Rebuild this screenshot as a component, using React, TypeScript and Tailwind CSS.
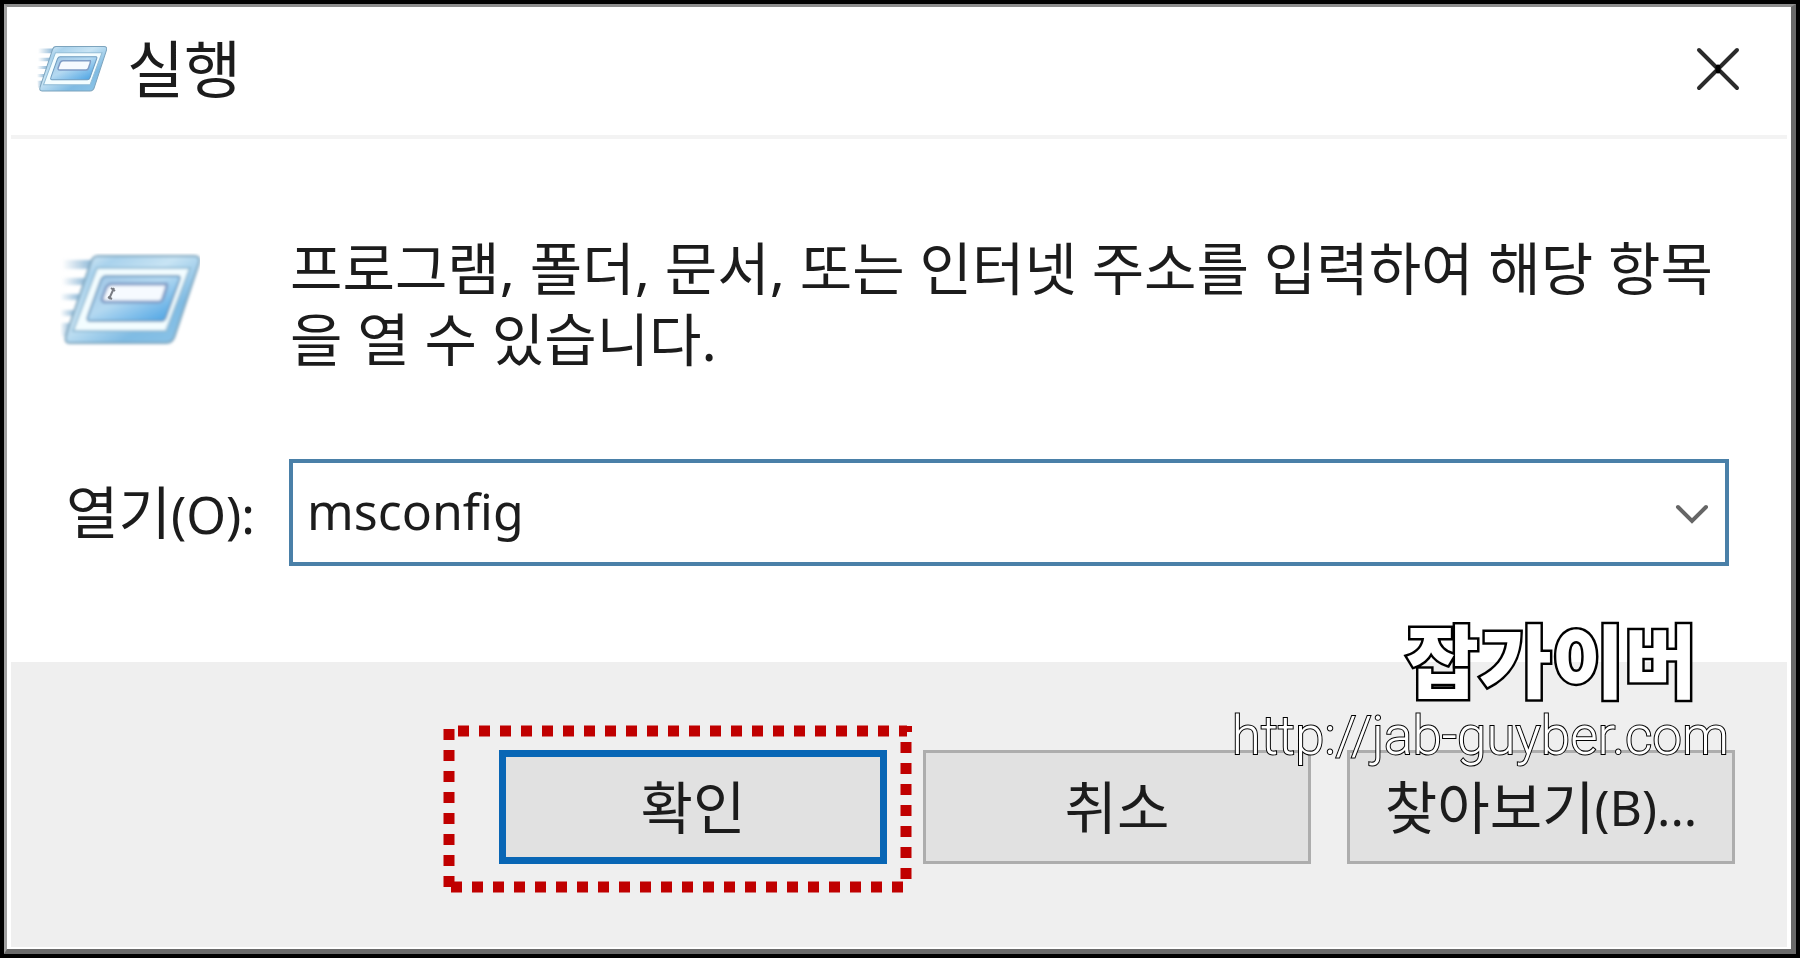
import React from "react";

const ui = "font-['Noto_Sans','Noto_Sans_CJK_KR',sans-serif]";
const button =
  "flex h-[114px] w-[388px] items-center justify-center bg-[#e1e1e1] text-[57px] leading-none whitespace-nowrap text-[#1c1c1c]";

function RunIcon({ id, className }: { id: string; className: string }) {
  return (
    <svg viewBox="0 0 140 94" className={className} aria-hidden="true" preserveAspectRatio="none">
      <defs>
        <linearGradient id={`${id}-outer`} x1="0" y1="0" x2="1" y2="1">
          <stop offset="0" stopColor="#eef7fc" />
          <stop offset=".2" stopColor="#a9d2ec" />
          <stop offset=".42" stopColor="#c8e4f4" />
          <stop offset=".7" stopColor="#7fbbe3" />
          <stop offset="1" stopColor="#8ec6e8" />
        </linearGradient>
        <linearGradient id={`${id}-inner`} x1="0" y1="0" x2="1" y2="1">
          <stop offset="0" stopColor="#9fc5e4" />
          <stop offset=".45" stopColor="#b4d9f1" />
          <stop offset="1" stopColor="#3f9de2" />
        </linearGradient>
        <linearGradient id={`${id}-speed`} x1="0" x2="1">
          <stop offset="0" stopColor="#8fb6d2" stopOpacity="0" />
          <stop offset="1" stopColor="#86b4d6" />
        </linearGradient>
        <filter id={`${id}-soft`} x="-10%" y="-10%" width="120%" height="120%">
          <feGaussianBlur stdDeviation="1.5" />
        </filter>
      </defs>
      <g filter={`url(#${id}-soft)`}>
        <g fill={`url(#${id}-speed)`}>
          <path d="M2 7h32l-3 9H2z" />
          <path d="M2 25h26l-3 7H2z" />
          <path d="M0 41h21l-3 6H0z" />
          <path d="M0 57h16l-3 6H0z" />
          <path d="M0 70h11l-4 12-5 2z" />
        </g>
        <path
          d="M38 3H134Q141 3 139 10L115 82Q113 90 106 90H10Q4 90 6 83L31 9Q33 3 38 3Z"
          fill={`url(#${id}-outer)`}
          stroke="#7da4bd"
          strokeWidth="2"
        />
        <path d="M37 15H130L106 78H13Z" fill="#f3fdff" stroke="#93bdd6" strokeWidth="2" />
        <path
          d="M46 23H118Q121 23 119 28L106 64Q105 68 101 68H30Q26 68 28 63L41 27Q43 23 46 23Z"
          fill={`url(#${id}-inner)`}
          stroke="#6e9cc0"
          strokeWidth="2"
        />
        <path
          d="M52 31H108Q107 31 106 36L103 45Q102 49 98 49H46Q40 49 43 43L46 35Q48 31 52 31Z"
          fill="#f6faff"
          stroke="#7f9cc6"
          strokeWidth="3"
        />
      </g>
      {id === "large" && (
        <path d="M54 35l-5 11M51 35l4 3M48 44l4 2" stroke="#7a7d84" strokeWidth="2" fill="none" />
      )}
    </svg>
  );
}

export default function App() {
  return (
    <div className={`flex min-h-screen flex-col bg-black p-1 text-[#1c1c1c] ${ui}`}>
      <main className="flex grow flex-col border-t-[3px] border-r-[5px] border-b-[5px] border-l-[3px] border-t-[#8c8c8c] border-r-[#6a6a6a] border-b-[#6a6a6a] border-l-[#a0a0a0] bg-white px-1 pb-0.5">
        <header className="flex h-[132px] items-center border-b-4 border-[#f3f3f3] pr-[46px] pb-1 pl-[26px]">
          <RunIcon id="small" className="h-12 w-[70px]" />
          <h1 className="ml-5 grow text-[62px] leading-none">실행</h1>
          <button type="button" aria-label="닫기" className="p-px">
            <svg viewBox="0 0 44 44" className="size-11" fill="none" stroke="#2b2b2b" strokeWidth="4" strokeLinecap="round">
              <path d="M3 3l38 38M41 3L3 41" />
              <path d="M22 20v4" stroke="#000" strokeWidth="5" />
            </svg>
          </button>
        </header>

        <section className="flex items-start pt-[94px] pr-11 pl-[49px]">
          <RunIcon id="large" className="mt-5 h-[94px] w-[140px] shrink-0" />
          <p className="ml-[90px] grow text-[57px] leading-[71px]">
            프로그램, 폴더, 문서, 또는 인터넷 주소를 입력하여 해당 항목을 열 수 있습니다.
          </p>
        </section>

        <section className="flex items-center pt-[84px] pr-[58px] pb-24 pl-[55px]">
          <label htmlFor="command" className="w-[223px] shrink-0 text-[57px] leading-none whitespace-nowrap">
            열기<span className="text-[51px]">(O):</span>
          </label>
          <div className="flex h-[107px] grow items-center border-4 border-[#4a80a8] pr-4 pl-3.5">
            <input
              id="command"
              type="text"
              defaultValue="msconfig"
              className="min-w-0 grow bg-transparent pb-1 text-[50px] leading-none outline-none"
            />
            <button type="button" aria-label="목록 열기">
              <svg viewBox="0 0 34 22" className="h-[22px] w-[34px]" fill="none" stroke="#666" strokeWidth="4" strokeLinecap="round">
                <path d="M3 5l14 14L31 5" />
              </svg>
            </button>
          </div>
        </section>

        <footer className="relative flex grow items-start justify-end gap-9 bg-[#efefef] pt-[88px] pr-[52px]">
          <div className="relative">
            <button type="button" className={`${button} border-[7px] border-[#0866b5]`}>
              확인
            </button>
            <svg
              viewBox="0 0 470 170"
              className="pointer-events-none absolute -top-[26px] -left-14 h-[170px] w-[470px]"
              fill="none"
              stroke="#c00000"
              strokeWidth="11"
              aria-hidden="true"
            >
              <path d="M15 7H464" strokeDasharray="11 10" />
              <path d="M463 18V160" strokeDasharray="11 10" />
              <path d="M459 5h10" strokeWidth="6" />
              <path d="M6 5V166" strokeDasharray="11 10" />
              <path d="M8 163H460" strokeDasharray="11 10" />
            </svg>
          </div>
          <button type="button" className={`${button} border-[3px] border-[#adadad]`}>
            취소
          </button>
          <button type="button" className={`${button} border-[3px] border-[#adadad]`}>
            찾아보기<span className="text-[50px]">(B)...</span>
          </button>

          <div className="pointer-events-none absolute -top-12 right-[58px] flex flex-col items-end text-white">
            <strong className="mr-8 font-['Noto_Sans_CJK_KR',sans-serif] text-[79px] leading-[88px] font-black [-webkit-text-stroke:5px_#000] [paint-order:stroke_fill]">
              잡가이버
            </strong>
            <span className="mt-1 font-['Roboto',sans-serif] text-[53px] leading-[60px] font-light [-webkit-text-stroke:2px_#000] [paint-order:stroke_fill]">
              http://jab-guyber.com
            </span>
          </div>
        </footer>
      </main>
    </div>
  );
}
